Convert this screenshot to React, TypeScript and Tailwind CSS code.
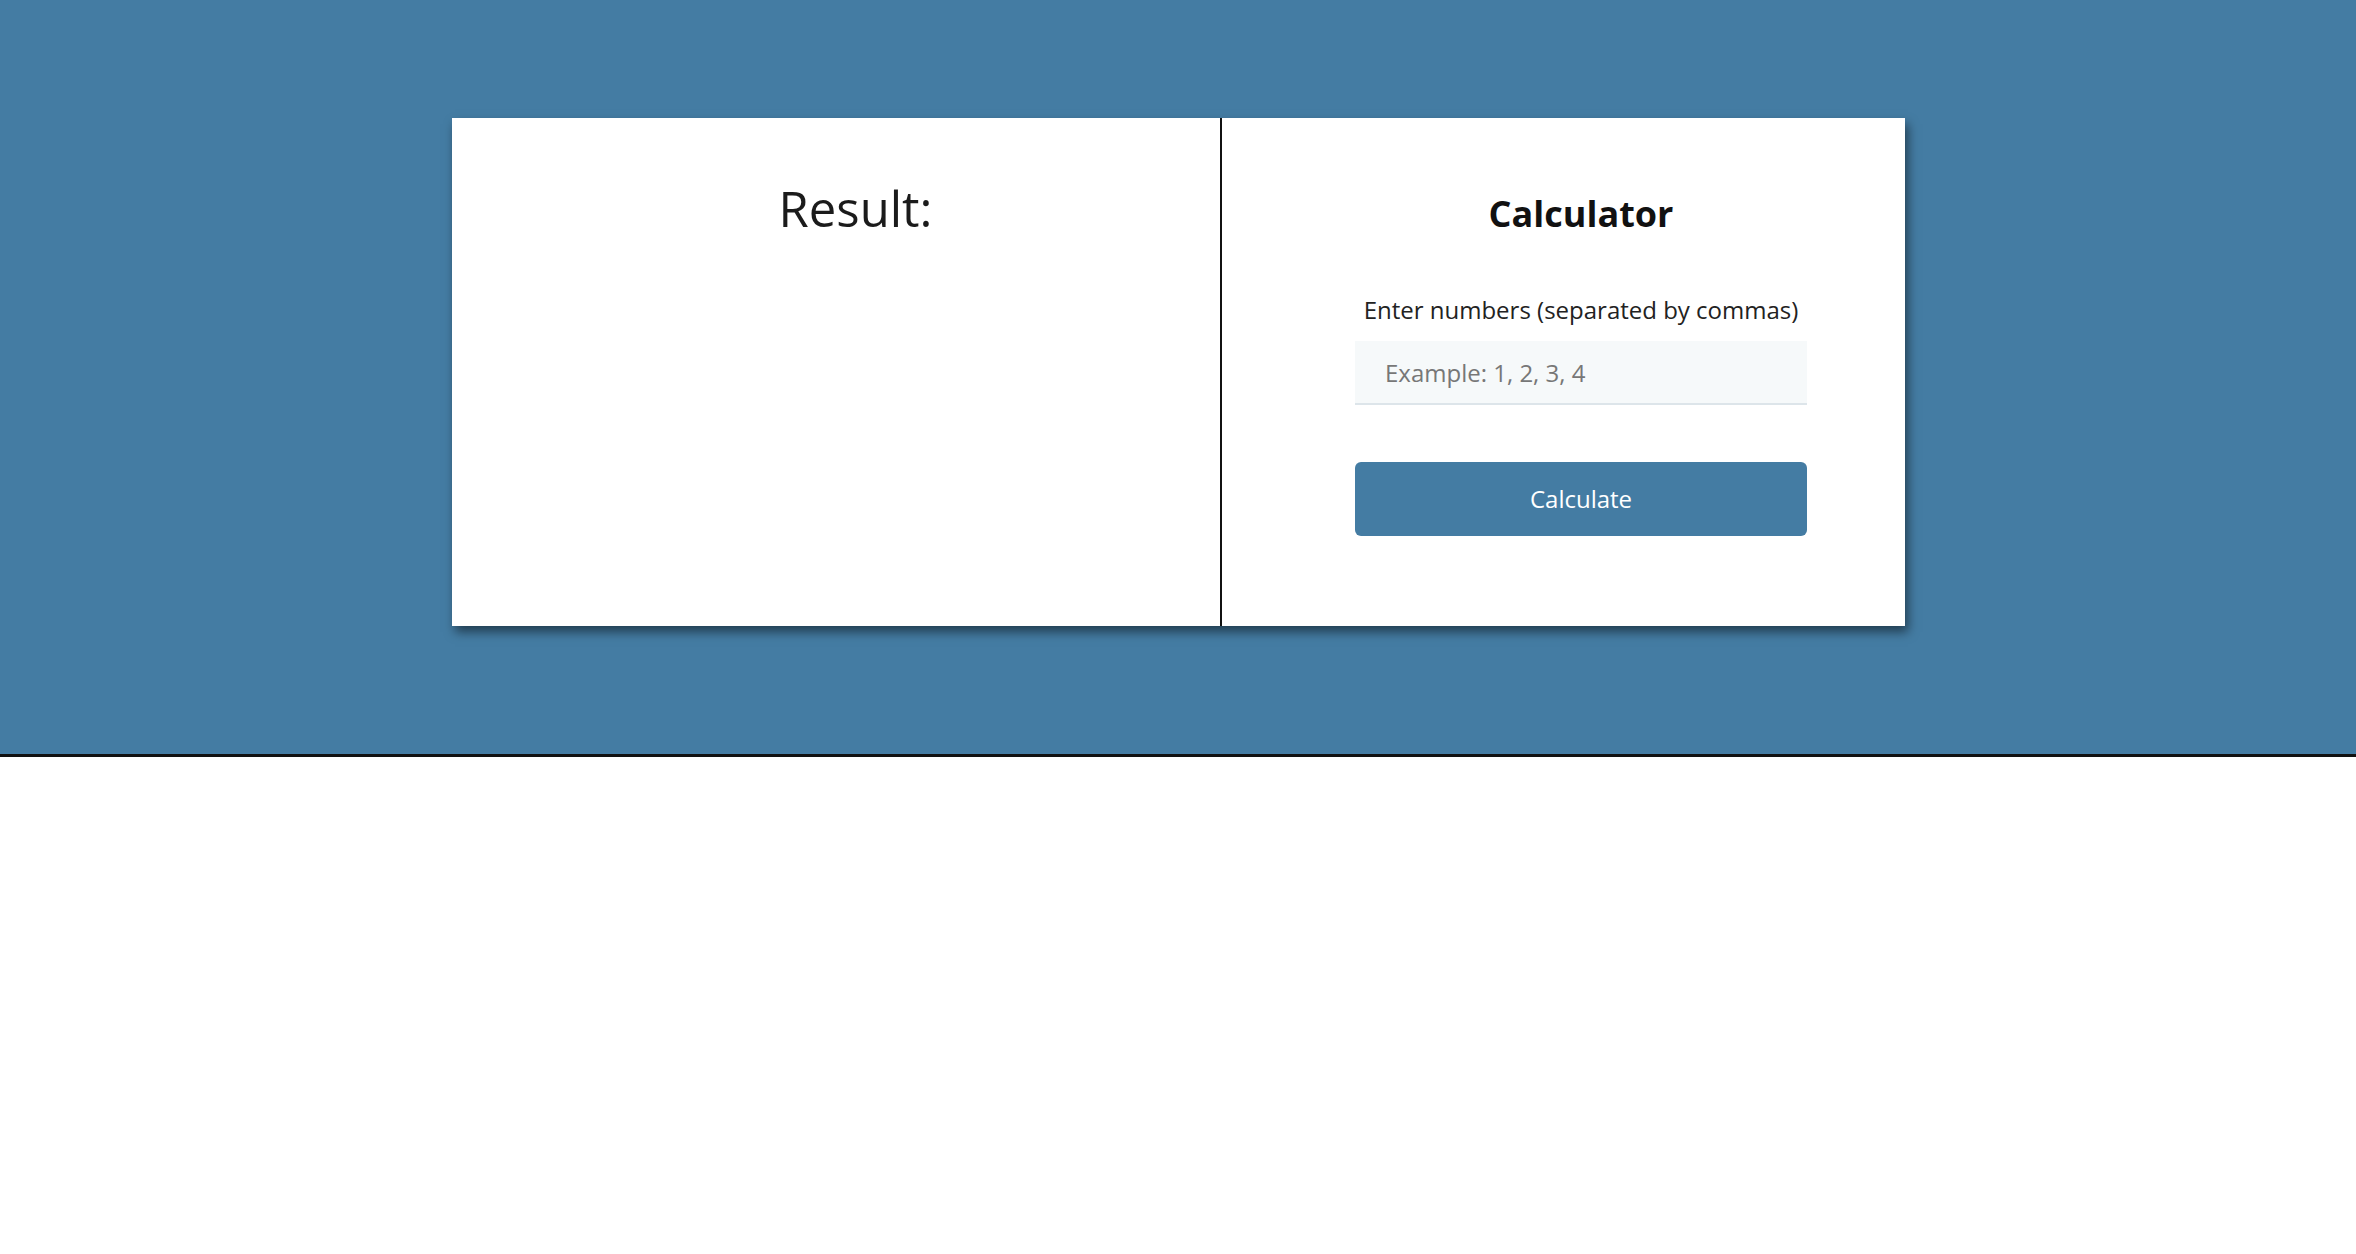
export default function App() {
  return (
    <div className="min-h-screen bg-white font-['Open_Sans',sans-serif]">
      <header className="h-[757px] bg-[#447ca3] border-b-[3px] border-[#111] pt-[118px]">
        <div className="mx-auto flex w-[1453px] h-[508px] bg-white shadow-[3px_6px_10px_rgba(0,0,0,0.5)]">
          {/* result side */}
          <section className="w-[770px] border-r-2 border-[#111] pl-[40px] flex flex-col items-center">
            <h1 className="mt-[56px] text-[49px] leading-[68px] text-[#1b1b1b]">Result:</h1>
          </section>

          {/* calculator side */}
          <section className="flex-1 pl-[36px] flex flex-col items-center">
            <h2 className="mt-[71px] text-[36px] leading-[50px] font-bold text-[#111]">Calculator</h2>
            <label className="mt-[55px] text-[24px] leading-[32px] text-[#222]">
              Enter numbers (separated by commas)
            </label>
            <input
              type="text"
              placeholder="Example: 1, 2, 3, 4"
              className="mt-[15px] w-[452px] h-[64px] bg-[#f6f9fa] border-b-2 border-[#dde5ea] px-[30px] text-[24px] text-[#333] placeholder:text-[#777] outline-none"
            />
            <button className="mt-[57px] w-[452px] h-[74px] rounded-[6px] bg-[#447ca3] text-white text-[24px]">
              Calculate
            </button>
          </section>
        </div>
      </header>
    </div>
  );
}
